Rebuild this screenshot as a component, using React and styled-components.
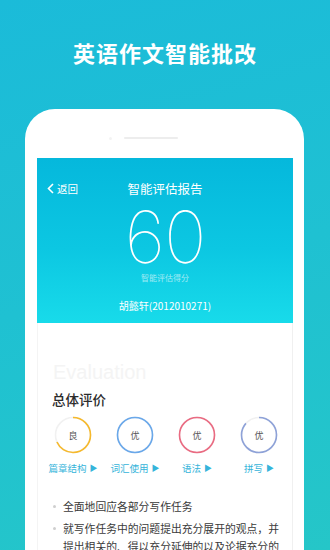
import React from 'react';
import styled, { createGlobalStyle } from 'styled-components';

const GlobalStyle = createGlobalStyle`
  html, body {
    margin: 0;
    padding: 0;
  }
  body {
    font-family: "Noto Sans CJK SC", "Noto Sans", sans-serif;
  }
`;

const scores = [
  { grade: '良', label: '篇章结构', color: '#f6b92c', progress: 0.68 },
  { grade: '优', label: '词汇使用', color: '#6aa8ea', progress: 1 },
  { grade: '优', label: '语法', color: '#ea6b82', progress: 1 },
  { grade: '优', label: '拼写', color: '#8ea2d8', progress: 0.86 },
];

const bullets = [
  '全面地回应各部分写作任务',
  '就写作任务中的问题提出充分展开的观点，并提出相关的、得以充分延伸的以及论据充分的',
];

const Ring = ({ color, progress, grade }) => {
  const r = 17.5;
  const c = 2 * Math.PI * r;
  return (
    <RingBox>
      <svg width="38" height="38" viewBox="0 0 38 38">
        <circle cx="19" cy="19" r={r} fill="none" stroke="#f1f1f1" strokeWidth="1.6" />
        <circle
          cx="19"
          cy="19"
          r={r}
          fill="none"
          stroke={color}
          strokeWidth="1.6"
          strokeDasharray={`${c * progress} ${c}`}
          transform="rotate(-90 19 19)"
        />
      </svg>
      <Grade>{grade}</Grade>
    </RingBox>
  );
};

const App = () => (
  <>
    <GlobalStyle />
    <Page>
      <Headline>英语作文智能批改</Headline>
      <Phone>
        <Bezel>
          <Dot />
          <Speaker />
        </Bezel>
        <Screen>
          <Report>
            <NavBar>
              <Back>
                <svg width="7" height="11" viewBox="0 0 7 11">
                  <path d="M6 1 L1.5 5.5 L6 10" fill="none" stroke="#fff" strokeWidth="1.6" />
                </svg>
                返回
              </Back>
              <NavTitle>智能评估报告</NavTitle>
            </NavBar>
            <Score>60</Score>
            <ScoreCaption>智能评估得分</ScoreCaption>
            <Student>胡懿轩(2012010271)</Student>
          </Report>
          <Body>
            <Ghost>Evaluation</Ghost>
            <SectionTitle>总体评价</SectionTitle>
            <RingRow>
              {scores.map((s) => (
                <RingItem key={s.label}>
                  <Ring color={s.color} progress={s.progress} grade={s.grade} />
                  <RingLabel>
                    {s.label}
                    <Arrow>▶</Arrow>
                  </RingLabel>
                </RingItem>
              ))}
            </RingRow>
            <List>
              {bullets.map((b) => (
                <Item key={b}>{b}</Item>
              ))}
            </List>
          </Body>
        </Screen>
      </Phone>
    </Page>
  </>
);

const Page = styled.div`
  width: 330px;
  height: 550px;
  overflow: hidden;
  background: linear-gradient(165deg, #1bbbd9 0%, #1fc1d2 50%, #25c6c8 100%);
  display: flex;
  flex-direction: column;
  align-items: center;
`;

const Headline = styled.h1`
  margin: 39px 0 0;
  font-size: 22px;
  line-height: 26px;
  font-weight: 700;
  color: #fff;
  letter-spacing: 1px;
`;

const Phone = styled.div`
  margin-top: 44px;
  width: 279px;
  margin-left: -1px;
  background: #fff;
  border-radius: 30px 30px 0 0;
  padding: 0 11px 0 12px;
  box-sizing: border-box;
  flex-shrink: 0;
`;

const Bezel = styled.div`
  height: 49px;
  display: flex;
  justify-content: center;
  align-items: flex-start;
  padding-top: 28px;
  box-sizing: border-box;
  gap: 12px;
`;

const Dot = styled.span`
  width: 3px;
  height: 3px;
  border-radius: 50%;
  background: #f3f3f3;
  margin-left: -44px;
`;

const Speaker = styled.span`
  width: 54px;
  height: 2px;
  border-radius: 1px;
  background: #ededed;
`;

const Screen = styled.div`
  border-left: 1px solid #f4f4f4;
  border-right: 1px solid #f0f0f0;
  height: 400px;
`;

const Report = styled.div`
  height: 165px;
  margin: 0 -1px;
  background: linear-gradient(180deg, #05b8dc 0%, #0cc7e2 55%, #18dbea 100%);
  color: #fff;
  display: flex;
  flex-direction: column;
  align-items: center;
  padding-top: 22px;
  box-sizing: border-box;
`;

const NavBar = styled.div`
  width: 100%;
  height: 16px;
  display: flex;
  align-items: center;
  justify-content: center;
  position: relative;
`;

const Back = styled.span`
  position: absolute;
  left: 10px;
  top: 0;
  height: 16px;
  display: flex;
  align-items: center;
  gap: 3px;
  font-size: 10.5px;
`;

const NavTitle = styled.span`
  font-size: 12.5px;
`;

const Score = styled.div`
  font-family: "Inter", "Lato", "Liberation Sans", sans-serif;
  font-weight: 100;
  font-size: 72px;
  line-height: 54px;
  margin-top: 14px;
  letter-spacing: -1px;
`;

const ScoreCaption = styled.div`
  font-size: 8px;
  line-height: 10px;
  margin-top: 9px;
  color: rgba(255, 255, 255, 0.6);
`;

const Student = styled.div`
  font-size: 10px;
  line-height: 12px;
  margin-top: 17px;
`;

const Body = styled.div`
  padding: 37px 0 0 15px;
`;

const Ghost = styled.div`
  font-family: "Liberation Sans", "Noto Sans", sans-serif;
  font-size: 20px;
  line-height: 24px;
  color: #f4f4f4;
`;

const SectionTitle = styled.div`
  margin-top: 6px;
  margin-left: -1px;
  font-size: 13.5px;
  line-height: 18px;
  font-weight: 500;
  color: #2b2b2b;
`;

const RingRow = styled.div`
  margin-top: 8px;
  display: grid;
  grid-template-columns: repeat(4, 62px);
  margin-left: -11px;
`;

const RingItem = styled.div`
  display: flex;
  flex-direction: column;
  align-items: center;
`;

const RingBox = styled.div`
  width: 38px;
  height: 38px;
  position: relative;
  svg {
    display: block;
  }
`;

const Grade = styled.span`
  position: absolute;
  inset: 0;
  display: flex;
  align-items: center;
  justify-content: center;
  font-size: 9px;
  color: #555;
`;

const RingLabel = styled.div`
  margin-top: 8px;
  font-size: 9.5px;
  line-height: 12px;
  color: #35b4da;
  display: flex;
  align-items: center;
  gap: 3px;
  white-space: nowrap;
`;

const Arrow = styled.span`
  font-size: 8px;
`;

const List = styled.ul`
  list-style: none;
  margin: 23px 0 0;
  padding: 0 12px 0 0;
`;

const Item = styled.li`
  position: relative;
  padding-left: 10px;
  font-size: 10.8px;
  line-height: 18px;
  color: #3a3a3a;
  margin-bottom: 4px;
  &::before {
    content: '';
    position: absolute;
    left: 0;
    top: 8px;
    width: 3px;
    height: 3px;
    border-radius: 50%;
    background: #cfcfcf;
  }
`;

export default App;
